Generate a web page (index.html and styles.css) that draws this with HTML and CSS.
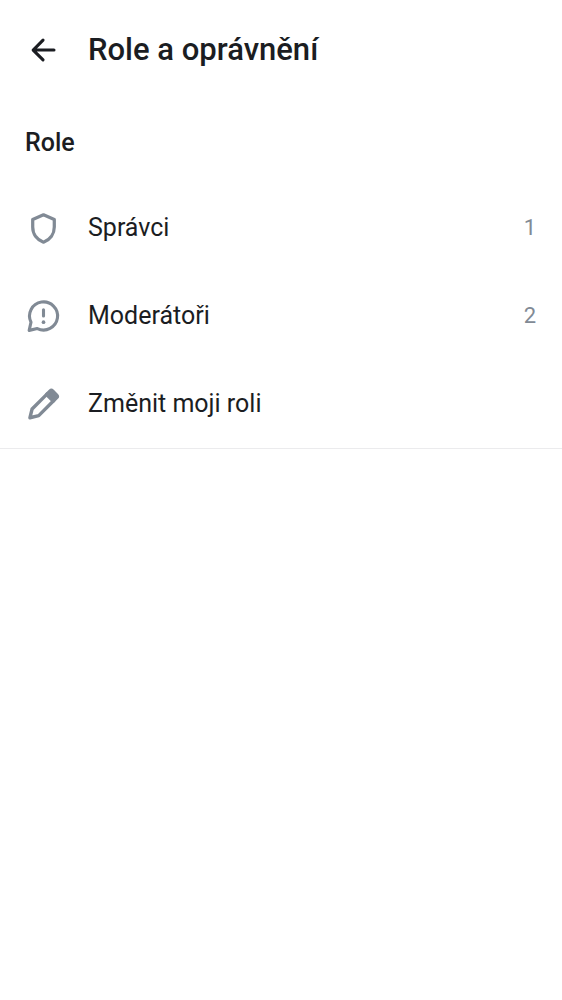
FILE: index.html
```html
<!DOCTYPE html>
<html lang="cs">
<head>
<meta charset="utf-8">
<meta name="viewport" content="width=device-width, initial-scale=1">
<title>Role a oprávnění</title>
<link rel="stylesheet" href="styles.css">
</head>
<body>
<header class="topbar">
  <button class="back" type="button" aria-label="Zpět">
    <svg class="icon" viewBox="0 0 24 24" fill="none" stroke="currentColor" stroke-width="2" stroke-linecap="round" stroke-linejoin="round"><path d="M18.800 11.700H5.400M11.700 5.300 5.300 11.700l6.400 6.400"/></svg>
  </button>
  <h1 class="title">Role a oprávnění</h1>
</header>
<main class="section">
  <h2 class="heading">Role</h2>
  <ul class="list">
    <li><button class="row" type="button">
      <svg class="icon" viewBox="0 0 24 24" fill="none" stroke="currentColor" stroke-width="2.100" stroke-linejoin="round" aria-hidden="true"><path d="M12 3.100 5 6.100v5c0 4.400 2.600 8.200 7 9.800 4.400-1.600 7-5.400 7-9.800v-5z"/></svg>
      <span class="label">Správci</span><span class="count">1</span>
    </button></li>
    <li><button class="row" type="button">
      <svg class="icon" viewBox="0 0 24 24" fill="none" stroke="currentColor" stroke-width="2" stroke-linejoin="round" aria-hidden="true"><path d="M3.900 15.700A9.100 9.100 0 1 1 8 19.800L2.700 21z"/><path d="M12 7.700v4" stroke-linecap="round"/><circle cx="12" cy="15.700" r="1.200" fill="currentColor" stroke="none"/></svg>
      <span class="label">Moderátoři</span><span class="count">2</span>
    </button></li>
    <li><button class="row" type="button">
      <svg class="icon" viewBox="0 0 24 24" fill="none" stroke="currentColor" stroke-width="2.200" stroke-linejoin="round" aria-hidden="true"><path d="M4.600 14.900 14.400 5.100l4.300 4.300L8.900 19.200l-5.700 1.400z"/><path fill="currentColor" d="m14 5.500 2.300-2.300q.8-.8 1.600 0l2.700 2.700q.8.800 0 1.600L18.300 9.800z"/></svg>
      <span class="label">Změnit moji roli</span>
    </button></li>
  </ul>
</main>
</body>
</html>
```
FILE: styles.css
```css
* {
  box-sizing: border-box;
}

body {
  margin: 0;
  background: #fff;
  color: #1b1d22;
  font-family: Roboto, "Noto Sans", sans-serif;
}

button {
  border: 0;
  background: none;
  color: inherit;
  font: inherit;
  text-align: left;
  cursor: pointer;
}

.topbar {
  display: flex;
  align-items: center;
  gap: 26px;
  height: 100px;
  padding: 0 25px;
}

.back {
  display: flex;
  padding: 0;
}

.icon {
  display: block;
  flex: none;
  width: 37px;
  height: 37px;
}

.title {
  margin: 0;
  font-size: 31px;
  font-weight: 500;
  line-height: 40px;
}

.section {
  border-bottom: 1px solid #ebebed;
}

.heading {
  margin: 0;
  padding: 25px 25px 23px;
  font-size: 25px;
  font-weight: 500;
  line-height: 36px;
}

.list {
  margin: 0;
  padding: 0;
  list-style: none;
}

.row {
  display: flex;
  align-items: center;
  gap: 26px;
  width: 100%;
  min-height: 88px;
  padding: 0 26px 0 25px;
}

.row .icon {
  color: #818a95;
}

.label {
  flex: 1;
  font-size: 25px;
  line-height: 36px;
}

.count {
  color: #818a95;
  font-size: 22px;
  line-height: 32px;
}
```
